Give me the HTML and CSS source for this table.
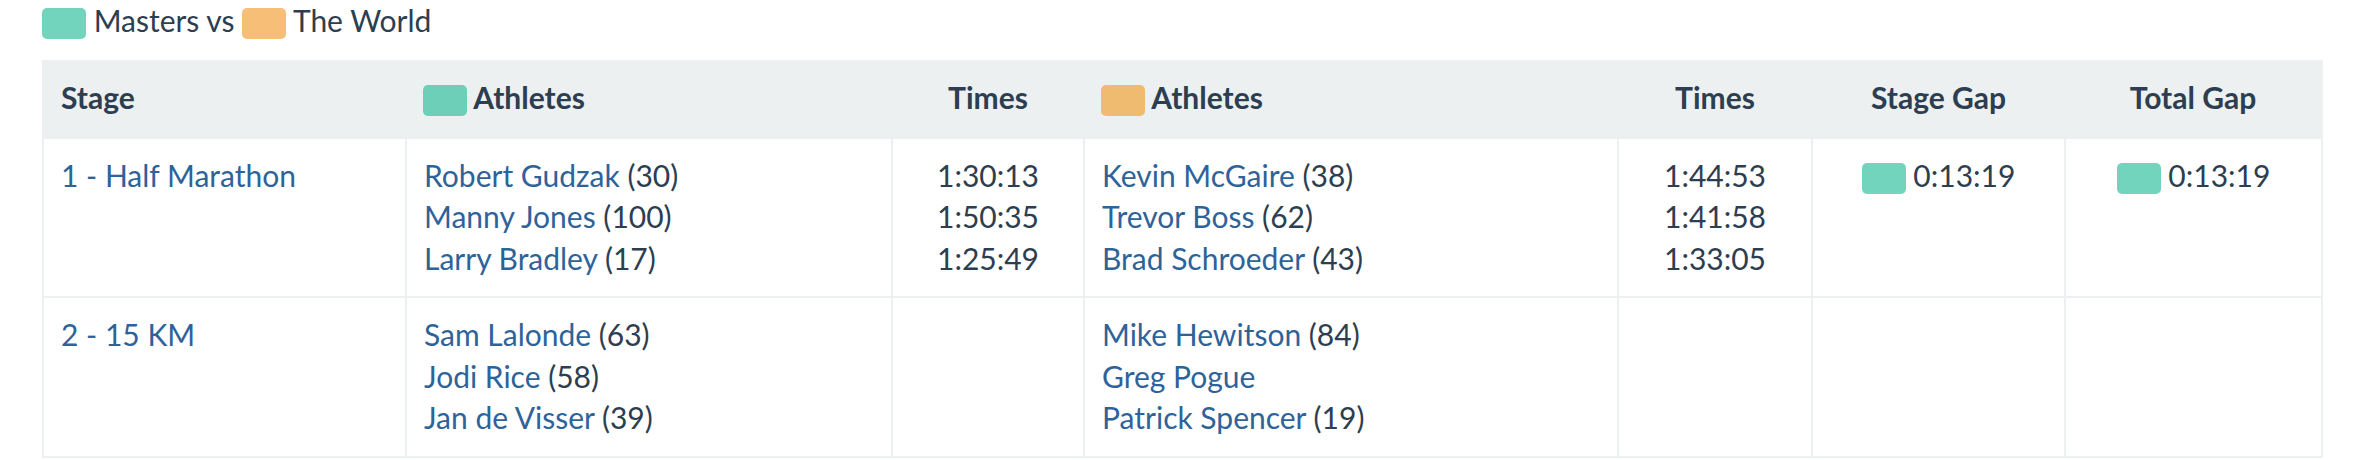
FILE: index.html
```html
<!DOCTYPE html>
<html>
<head>
<meta charset="utf-8">
<link rel="stylesheet" href="styles.css">
</head>
<body>
<div class="page">
  <div class="legend">
    <span class="sw sw-masters"></span> Masters vs <span class="sw sw-world"></span> The World
  </div>
  <table class="stages">
    <colgroup>
      <col class="c-stage"><col class="c-ath"><col class="c-times"><col class="c-ath2"><col class="c-times2"><col class="c-gap"><col class="c-gap2">
    </colgroup>
    <thead>
      <tr>
        <th>Stage</th>
        <th><span class="sw sw-masters-h"></span> Athletes</th>
        <th class="ctr">Times</th>
        <th><span class="sw sw-world-h"></span> Athletes</th>
        <th class="ctr">Times</th>
        <th class="ctr">Stage Gap</th>
        <th class="ctr">Total Gap</th>
      </tr>
    </thead>
    <tbody>
      <tr>
        <td><a href="#">1 - Half Marathon</a></td>
        <td>
          <div><a href="#">Robert Gudzak</a> (30)</div>
          <div><a href="#">Manny Jones</a> (100)</div>
          <div><a href="#">Larry Bradley</a> (17)</div>
        </td>
        <td class="ctr">
          <div>1:30:13</div>
          <div>1:50:35</div>
          <div>1:25:49</div>
        </td>
        <td>
          <div><a href="#">Kevin McGaire</a> (38)</div>
          <div><a href="#">Trevor Boss</a> (62)</div>
          <div><a href="#">Brad Schroeder</a> (43)</div>
        </td>
        <td class="ctr">
          <div>1:44:53</div>
          <div>1:41:58</div>
          <div>1:33:05</div>
        </td>
        <td class="ctr"><span class="sw sw-masters"></span> 0:13:19</td>
        <td class="ctr"><span class="sw sw-masters"></span> 0:13:19</td>
      </tr>
      <tr>
        <td><a href="#">2 - 15 KM</a></td>
        <td>
          <div><a href="#">Sam Lalonde</a> (63)</div>
          <div><a href="#">Jodi Rice</a> (58)</div>
          <div><a href="#">Jan de Visser</a> (39)</div>
        </td>
        <td class="ctr"></td>
        <td>
          <div><a href="#">Mike Hewitson</a> (84)</div>
          <div><a href="#">Greg Pogue</a></div>
          <div><a href="#">Patrick Spencer</a> (19)</div>
        </td>
        <td class="ctr"></td>
        <td class="ctr"></td>
        <td class="ctr"></td>
      </tr>
    </tbody>
  </table>
</div>
</body>
</html>
```
FILE: styles.css
```css
html, body {
  margin: 0;
  padding: 0;
  background: #ffffff;
}

body {
  font-family: Lato, "Open Sans", sans-serif;
  font-size: 30px;
  line-height: 41.5px;
  color: #2c3e50;
}

.page {
  padding: 0 33px 0 42px;
}

.legend {
  margin-bottom: 18.5px;
  white-space: nowrap;
}

.sw {
  display: inline-block;
  width: 44px;
  height: 31px;
  border-radius: 5px;
  vertical-align: -7px;
}

.sw-masters { background: #73d4be; }
.sw-world { background: #f7be78; }
.sw-masters-h { background: #6dcfb8; }
.sw-world-h { background: #efbb70; }

a {
  color: #2e6399;
  text-decoration: none;
}

.stages {
  width: 2279px;
  border-collapse: collapse;
  table-layout: fixed;
  border-left: 2px solid #ecf0f1;
  border-right: 2px solid #ecf0f1;
}

.c-stage { width: 363px; }
.c-ath { width: 486px; }
.c-times { width: 192px; }
.c-ath2 { width: 534px; }
.c-times2 { width: 194px; }
.c-gap { width: 253px; }
.c-gap2 { width: 257px; }

.stages th {
  background: #ecf0f1;
  font-weight: 700;
  text-align: left;
  padding: 16.5px 17px 20.5px;
  white-space: nowrap;
}

.stages td {
  vertical-align: top;
  padding: 16px 17px 17px;
  border-left: 2px solid #ecf0f1;
  border-bottom: 2px solid #ecf0f1;
  white-space: nowrap;
}

.stages td:first-child {
  border-left: none;
}

.stages .ctr {
  text-align: center;
}
```
